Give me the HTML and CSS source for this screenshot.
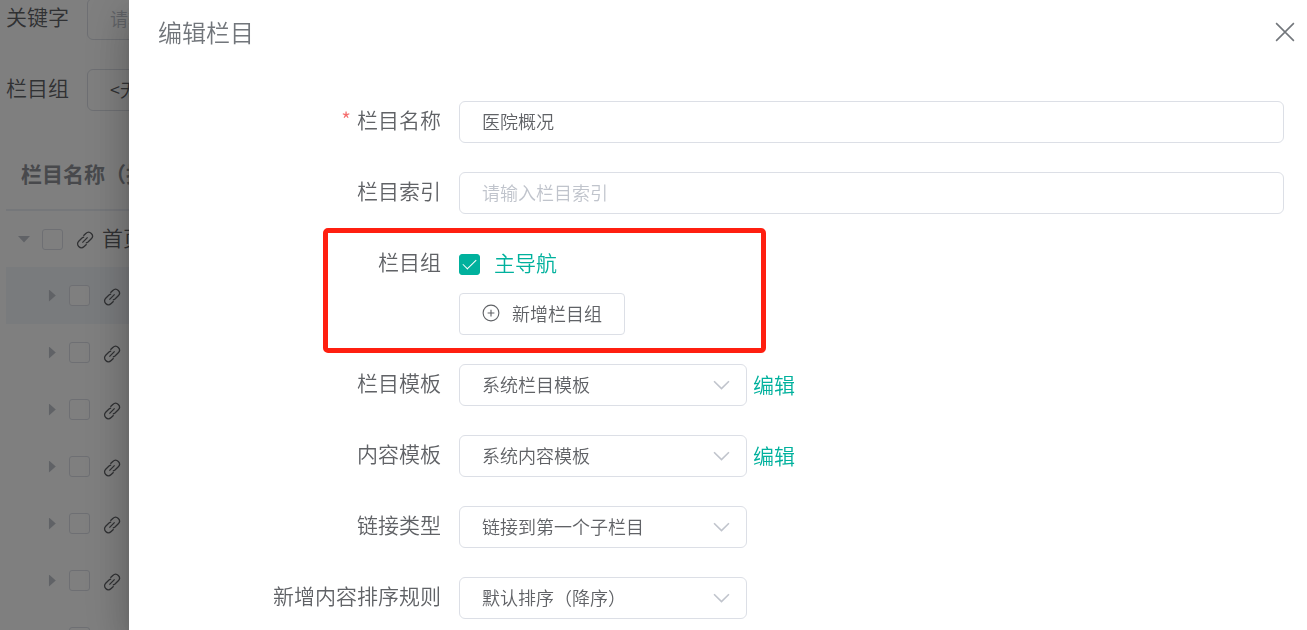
FILE: index.html
```html
<!DOCTYPE html>
<html lang="zh-CN">
<head>
    <meta charset="UTF-8">
    <meta name="viewport" content="width=device-width, initial-scale=1.0">
    <title>编辑栏目</title>
    <link rel="stylesheet" href="styles.css">
</head>
<body>
    <svg class="symbols" aria-hidden="true">
        <symbol id="link" viewBox="0 0 18 18">
            <path d="M7.4 4.8 9.8 2.5C11.4 1 13.8 1 15.3 2.5C16.8 4 16.8 6.3 15.3 7.8L12 11C11.4 11.5 10.6 11.8 9.8 11.8M10.6 13.2 8.2 15.5C6.6 17 4.2 17 2.7 15.5C1.2 14 1.2 11.7 2.7 10.2L6 7C6.6 6.5 7.4 6.2 8.2 6.2M6.4 11.6 11.6 6.4"/>
        </symbol>
        <symbol id="arrow" viewBox="0 0 16 10">
            <path d="M1 1 8 8 15 1"/>
        </symbol>
    </svg>

    <main class="page">
        <div class="filter">
            <label for="keyword">关键字</label>
            <input class="control" id="keyword" type="text" placeholder="请输入">
        </div>
        <div class="filter">
            <label for="filterGroup">栏目组</label>
            <select class="control" id="filterGroup"><option>&lt;无&gt;</option></select>
        </div>
        <table class="tree">
            <thead>
                <tr><th>栏目名称（拖</th></tr>
            </thead>
            <tbody>
                <tr><td><div class="node"><span class="caret open"></span><input class="check" type="checkbox" aria-label="首页"><svg class="link-icon"><use href="#link"/></svg><span>首页</span></div></td></tr>
                <tr class="active"><td><div class="node child"><span class="caret"></span><input class="check" type="checkbox" aria-label="栏目"><svg class="link-icon"><use href="#link"/></svg></div></td></tr>
                <tr><td><div class="node child"><span class="caret"></span><input class="check" type="checkbox" aria-label="栏目"><svg class="link-icon"><use href="#link"/></svg></div></td></tr>
                <tr><td><div class="node child"><span class="caret"></span><input class="check" type="checkbox" aria-label="栏目"><svg class="link-icon"><use href="#link"/></svg></div></td></tr>
                <tr><td><div class="node child"><span class="caret"></span><input class="check" type="checkbox" aria-label="栏目"><svg class="link-icon"><use href="#link"/></svg></div></td></tr>
                <tr><td><div class="node child"><span class="caret"></span><input class="check" type="checkbox" aria-label="栏目"><svg class="link-icon"><use href="#link"/></svg></div></td></tr>
                <tr><td><div class="node child"><span class="caret"></span><input class="check" type="checkbox" aria-label="栏目"><svg class="link-icon"><use href="#link"/></svg></div></td></tr>
                <tr><td><div class="node child"><span class="caret"></span><input class="check" type="checkbox" aria-label="栏目"><svg class="link-icon"><use href="#link"/></svg></div></td></tr>
            </tbody>
        </table>
    </main>

    <div class="mask">
        <section class="drawer">
            <header class="drawer-header">
                <h1>编辑栏目</h1>
                <button class="close" type="button" aria-label="关闭">
                    <svg viewBox="0 0 18 18"><path d="M1 1 17 17M17 1 1 17"/></svg>
                </button>
            </header>
            <form class="form">
                <div class="form-item">
                    <label class="form-label required" for="name">栏目名称</label>
                    <input class="control wide" id="name" type="text" value="医院概况">
                </div>
                <div class="form-item">
                    <label class="form-label" for="index">栏目索引</label>
                    <input class="control wide" id="index" type="text" placeholder="请输入栏目索引">
                </div>
                <div class="form-item marked">
                    <span class="form-label">栏目组</span>
                    <div class="group">
                        <label class="group-option"><input class="check" type="checkbox" checked><span>主导航</span></label>
                        <button class="add" type="button">
                            <svg viewBox="0 0 16 16"><circle cx="8" cy="8" r="7"/><path d="M5 8H11M8 5V11"/></svg>
                            新增栏目组
                        </button>
                    </div>
                </div>
                <div class="form-item">
                    <label class="form-label" for="channelTpl">栏目模板</label>
                    <div class="select">
                        <select class="control" id="channelTpl"><option>系统栏目模板</option></select>
                        <svg><use href="#arrow"/></svg>
                    </div>
                    <a class="edit" href="#">编辑</a>
                </div>
                <div class="form-item">
                    <label class="form-label" for="contentTpl">内容模板</label>
                    <div class="select">
                        <select class="control" id="contentTpl"><option>系统内容模板</option></select>
                        <svg><use href="#arrow"/></svg>
                    </div>
                    <a class="edit" href="#">编辑</a>
                </div>
                <div class="form-item">
                    <label class="form-label" for="linkType">链接类型</label>
                    <div class="select">
                        <select class="control" id="linkType"><option>链接到第一个子栏目</option></select>
                        <svg><use href="#arrow"/></svg>
                    </div>
                </div>
                <div class="form-item">
                    <label class="form-label" for="sort">新增内容排序规则</label>
                    <div class="select">
                        <select class="control" id="sort"><option>默认排序（降序）</option></select>
                        <svg><use href="#arrow"/></svg>
                    </div>
                </div>
            </form>
        </section>
    </div>
</body>
</html>
```
FILE: styles.css
```css
* {
    box-sizing: border-box;
}

body {
    margin: 0;
    height: 100vh;
    overflow: hidden;
    background: #fff;
    color: #606266;
    font-family: "Noto Sans CJK SC", sans-serif;
    font-weight: 350;
    font-size: 21px;
    line-height: 36px;
}

input, select, button {
    font-family: inherit;
    font-weight: inherit;
    color: inherit;
    margin: 0;
}

svg {
    fill: none;
    stroke: currentColor;
    flex: none;
}

.symbols {
    display: none;
}

.control {
    appearance: none;
    height: 42px;
    padding: 0 22px 2px;
    border: 1px solid #dcdfe6;
    border-radius: 6px;
    background: #fff;
    font-size: 18px;
}

.control::placeholder {
    color: #c0c4cc;
    opacity: 1;
}

.check {
    appearance: none;
    flex: none;
    display: grid;
    place-items: center;
    width: 21px;
    height: 21px;
    border: 1px solid #dcdfe6;
    border-radius: 3px;
    background: #fff;
}

.check:checked {
    background: #00b19d;
    border-color: #00b19d;
}

.check:checked::after {
    content: "";
    width: 6px;
    height: 12px;
    margin-bottom: 4px;
    border: solid #fff;
    border-width: 0 1px 1px 0;
    transform: rotate(45deg);
}

/* list page under the mask */
.page {
    margin: -2px 0 0 6px;
}

.filter {
    display: flex;
    gap: 18px;
    margin-bottom: 29px;
}

.filter .control {
    width: 288px;
}

.tree {
    width: 100%;
    border-collapse: collapse;
}

.tree th {
    height: 70px;
    padding: 0 15px 4px;
    border-bottom: 2px solid #ebeef5;
    color: #909399;
    font-weight: 700;
    text-align: left;
}

.tree td {
    height: 57px;
    padding: 0 12px;
}

.tree .active {
    background: #f3f6fa;
}

.node {
    display: flex;
    align-items: center;
}

.node span:last-child {
    padding-bottom: 4px;
}

.node.child {
    padding-left: 27px;
}

.caret {
    width: 12px;
    height: 12px;
    margin-right: 12px;
    background: #c0c4cc;
    clip-path: polygon(33% 0, 90% 50%, 33% 100%);
}

.caret.open {
    clip-path: polygon(0 25%, 100% 25%, 50% 80%);
}

.link-icon {
    width: 18px;
    height: 18px;
    margin: 2px 8px 0 13px;
    stroke-width: 1.3;
}

/* drawer */
.mask {
    position: fixed;
    inset: 0;
    background: rgba(0, 0, 0, .5);
}

.drawer {
    height: 100%;
    margin-left: 129px;
    background: #fff;
    box-shadow: 0 12px 15px -7px rgba(0, 0, 0, .2), 0 24px 36px 3px rgba(0, 0, 0, .14), 0 9px 45px 8px rgba(0, 0, 0, .12);
}

.drawer-header {
    display: flex;
    justify-content: space-between;
    padding: 12px 12px 0 29px;
    color: #72767b;
}

.drawer-header h1 {
    margin: 0;
    font-size: 24px;
    font-weight: inherit;
    line-height: 40px;
}

.close {
    display: flex;
    height: 40px;
    align-items: center;
    padding: 0;
    border: 0;
    background: none;
    cursor: pointer;
}

.close svg {
    width: 20px;
    height: 20px;
    stroke-width: 1.4;
}

.form {
    padding: 49px 23px 0 0;
}

.form-item {
    display: flex;
    margin-bottom: 29px;
}

.form-label {
    flex: none;
    width: 330px;
    padding-right: 18px;
    text-align: right;
}

.required::before {
    content: "*";
    margin-right: 6px;
    color: #f56c6c;
}

.wide {
    flex: 1;
    min-width: 0;
}

.marked {
    position: relative;
}

/* red frame round the group row */
.marked::after {
    content: "";
    position: absolute;
    top: -15px;
    bottom: -18px;
    left: 194px;
    width: 433px;
    border: 5px solid #ff1f10;
    border-radius: 5px;
    pointer-events: none;
}

.group {
    display: grid;
    gap: 8px;
    justify-items: start;
}

.group-option {
    display: flex;
    align-items: center;
    gap: 14px;
    height: 42px;
    color: #00b19d;
}

.group-option span {
    padding-bottom: 4px;
}

.add {
    display: flex;
    align-items: center;
    gap: 12px;
    height: 42px;
    padding: 0 22px 2px;
    border: 1px solid #dcdfe6;
    border-radius: 4px;
    background: #fff;
    font-size: 18px;
    cursor: pointer;
}

.add svg {
    width: 18px;
    height: 18px;
}

.select {
    position: relative;
    width: 288px;
}

.select .control {
    width: 100%;
}

.select svg {
    position: absolute;
    top: 16px;
    right: 17px;
    width: 17px;
    height: 11px;
    color: #c0c4cc;
    stroke-width: 1.5;
    pointer-events: none;
}

.edit {
    margin-left: 6px;
    color: #00b19d;
    line-height: 40px;
    text-decoration: none;
}
```
